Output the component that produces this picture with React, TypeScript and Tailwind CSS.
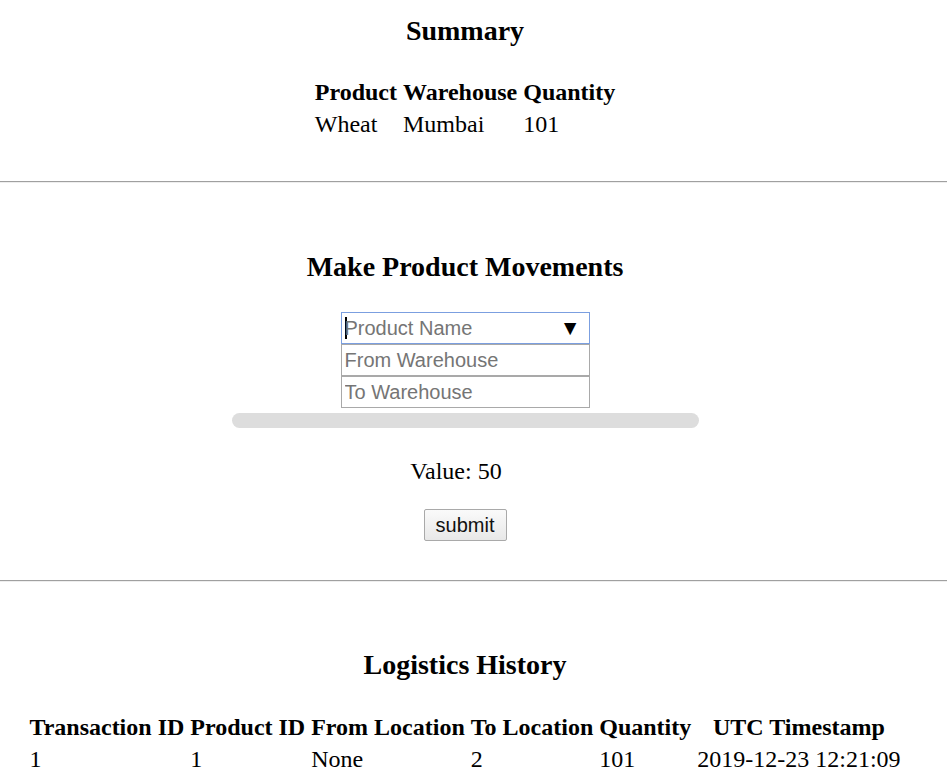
import React from "react";

const serif = { fontFamily: '"Liberation Serif", "Times New Roman", serif' };
const sans = { fontFamily: '"Liberation Sans", Arial, sans-serif' };

export default function App() {
  const history = [
    ["1", "1", "None", "2", "101", "2019-12-23 12:21:09"],
  ];
  return (
    <div className="w-[947px] bg-white text-black" style={serif}>
      <div className="w-[930px] flex flex-col items-center">
        <h3 className="mt-[15px] text-[28px] leading-[32px] font-bold">Summary</h3>
        <table className="mt-[27px] border-separate border-spacing-[3px] text-[24px] leading-[26px]">
          <thead>
            <tr>
              <th className="p-[1.5px] font-bold text-center">Product</th>
              <th className="p-[1.5px] font-bold text-center">Warehouse</th>
              <th className="p-[1.5px] font-bold text-center">Quantity</th>
            </tr>
          </thead>
          <tbody>
            <tr>
              <td className="p-[1.5px]">Wheat</td>
              <td className="p-[1.5px]">Mumbai</td>
              <td className="p-[1.5px]">101</td>
            </tr>
          </tbody>
        </table>
      </div>
      <hr className="mt-[40px] border-0 border-t border-t-[#a0a0a0] border-b border-b-[#eeeeee] h-[2px]" />
      <div className="w-[930px] flex flex-col items-center">
        <h3 className="mt-[68px] text-[28px] leading-[32px] font-bold">Make Product Movements</h3>
        <div className="mt-[29px] w-[249px] flex flex-col" style={sans}>
          <div className="h-[32px] border border-[#7b9fe0] flex items-center pl-[3px] pr-[8px] text-[20px] leading-[24px]">
            <span className="w-[2px] h-[22px] bg-black shrink-0 -mr-[2px]" />
            <span className="text-[#757575] flex-1">Product Name</span>
            <span className="text-black text-[21px] leading-[24px]">▼</span>
          </div>
          <input
            className="h-[32px] border border-[#a9a9a9] px-[3px] text-[20px] outline-none placeholder:text-[#757575]"
            placeholder="From Warehouse"
            style={sans}
          />
          <input
            className="h-[32px] border border-[#a9a9a9] px-[3px] text-[20px] outline-none placeholder:text-[#757575]"
            placeholder="To Warehouse"
            style={sans}
          />
        </div>
        <div className="mt-[5px] w-[467px] h-[15px] rounded-full bg-[#dddddd]" />
        <p className="mt-[29px] text-[24px] leading-[28px] pr-[18px]">Value: 50</p>
        <button
          className="mt-[24px] w-[83px] h-[32px] border border-[#a9a9a9] rounded-[2px] bg-gradient-to-b from-[#fafafa] to-[#e8e8e8] text-[20px] text-[#111]"
          style={sans}
        >
          submit
        </button>
      </div>
      <hr className="mt-[39px] border-0 border-t border-t-[#a0a0a0] border-b border-b-[#eeeeee] h-[2px]" />
      <div className="w-[930px] flex flex-col items-center">
        <h3 className="mt-[67px] text-[28px] leading-[32px] font-bold">Logistics History</h3>
        <table className="mt-[28px] border-separate border-spacing-[3px] text-[24px] leading-[26px]">
          <thead>
            <tr>
              {["Transaction ID", "Product ID", "From Location", "To Location", "Quantity", "UTC Timestamp"].map((h) => (
                <th key={h} className="p-[1.5px] font-bold text-center whitespace-nowrap">{h}</th>
              ))}
            </tr>
          </thead>
          <tbody>
            {history.map((r, i) => (
              <tr key={i}>
                {r.map((c, j) => (
                  <td key={j} className="p-[1.5px] whitespace-nowrap">{c}</td>
                ))}
              </tr>
            ))}
          </tbody>
        </table>
      </div>
    </div>
  );
}
